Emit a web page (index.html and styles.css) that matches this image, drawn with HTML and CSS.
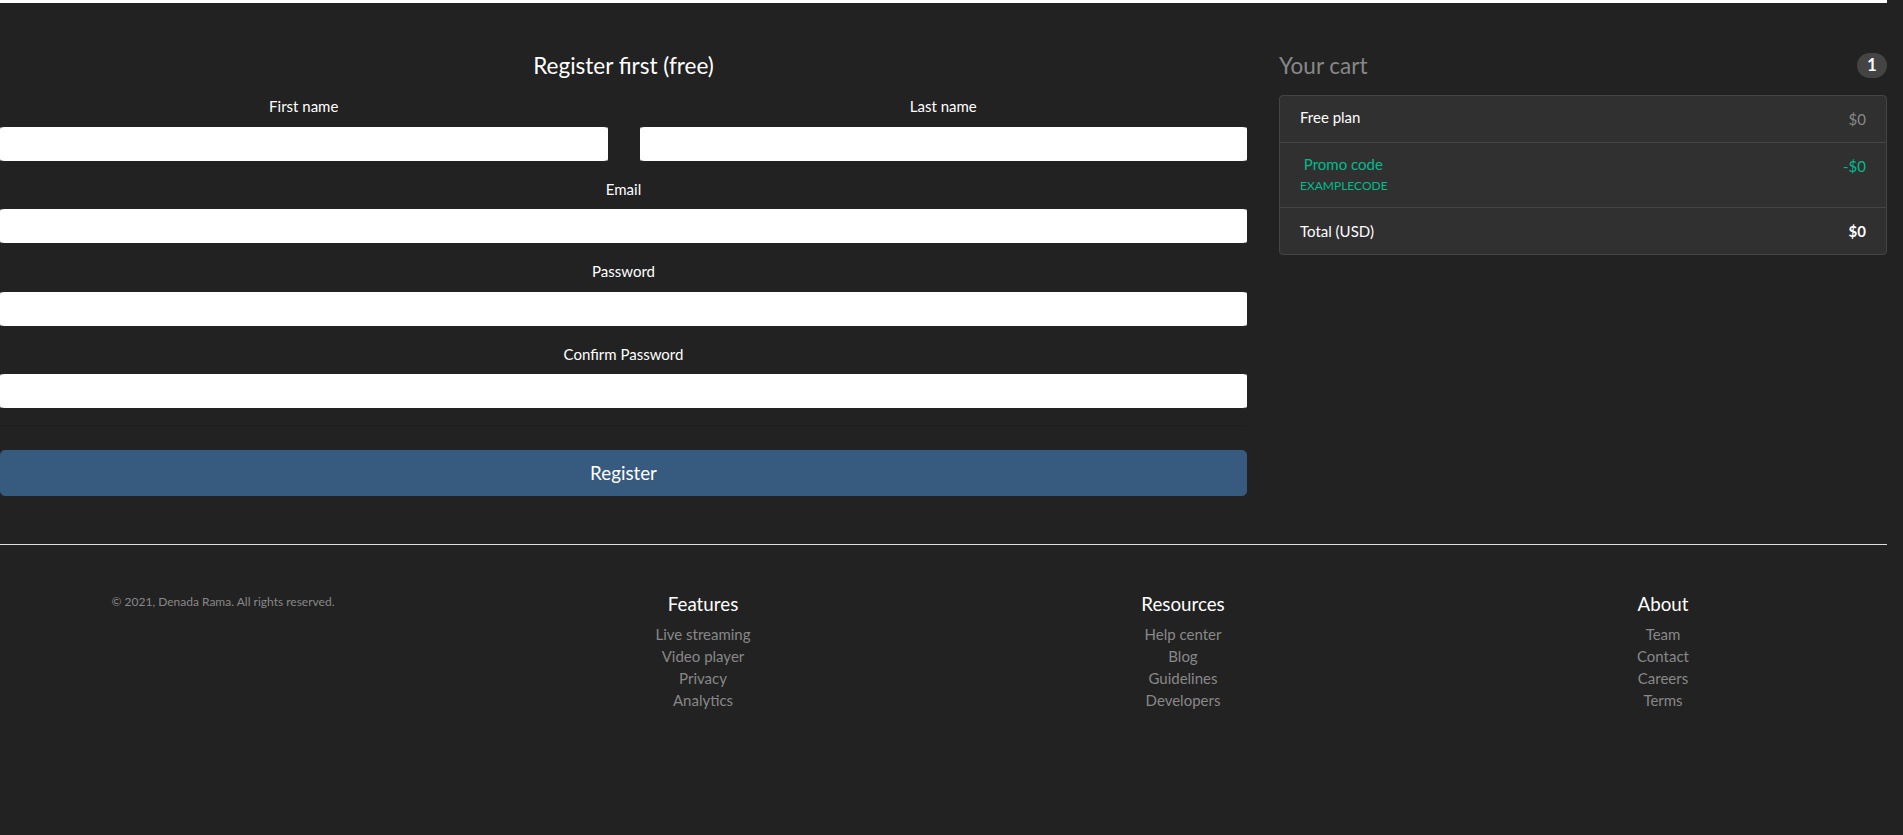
FILE: index.html
```html
<!DOCTYPE html>
<html lang="en">
<head>
<meta charset="utf-8">
<title>Register</title>
<link rel="stylesheet" href="styles.css">
</head>
<body>
<div class="topbar"></div>
<main class="page">
  <section class="form-col">
    <h4 class="title">Register first (free)</h4>
    <form class="form">
      <div class="two">
        <div class="group">
          <label class="label">First name</label>
          <input class="input" type="text">
        </div>
        <div class="group">
          <label class="label">Last name</label>
          <input class="input" type="text">
        </div>
      </div>
      <div class="group">
        <label class="label">Email</label>
        <input class="input" type="email">
      </div>
      <div class="group">
        <label class="label">Password</label>
        <input class="input" type="password">
      </div>
      <div class="group">
        <label class="label">Confirm Password</label>
        <input class="input" type="password">
      </div>
      <hr class="sep">
      <button class="btn" type="button">Register</button>
    </form>
  </section>
  <aside class="cart-col">
    <h4 class="cart-head"><span class="muted">Your cart</span><span class="badge">1</span></h4>
    <ul class="list">
      <li class="item">
        <div><h6 class="item-title">Free plan</h6></div>
        <span class="muted">$0</span>
      </li>
      <li class="item">
        <div class="success">
          <h6 class="item-title">&nbsp;Promo code</h6>
          <small class="small">EXAMPLECODE</small>
        </div>
        <span class="success">-$0</span>
      </li>
      <li class="item">
        <span>Total (USD)</span>
        <strong>$0</strong>
      </li>
    </ul>
  </aside>
</main>
<hr class="footer-line">
<footer class="footer">
  <div class="fcol">
    <small class="copy">© 2021, Denada Rama. All rights reserved.</small>
  </div>
  <div class="fcol">
    <h5 class="fhead">Features</h5>
    <ul class="links">
      <li><a href="#">Live streaming</a></li>
      <li><a href="#">Video player</a></li>
      <li><a href="#">Privacy</a></li>
      <li><a href="#">Analytics</a></li>
    </ul>
  </div>
  <div class="fcol">
    <h5 class="fhead">Resources</h5>
    <ul class="links">
      <li><a href="#">Help center</a></li>
      <li><a href="#">Blog</a></li>
      <li><a href="#">Guidelines</a></li>
      <li><a href="#">Developers</a></li>
    </ul>
  </div>
  <div class="fcol">
    <h5 class="fhead">About</h5>
    <ul class="links">
      <li><a href="#">Team</a></li>
      <li><a href="#">Contact</a></li>
      <li><a href="#">Careers</a></li>
      <li><a href="#">Terms</a></li>
    </ul>
  </div>
</footer>
</body>
</html>
```

FILE: styles.css
```css
* { box-sizing: border-box; }
html, body { margin: 0; padding: 0; }
body {
  background: #222222;
  color: #ffffff;
  font-family: Lato, "Open Sans", "Liberation Sans", sans-serif;
  font-size: 15px;
  line-height: 1.5;
  overflow-x: hidden;
  min-height: 835px;
}
.topbar {
  height: 3px;
  width: 1887px;
  background: #ffffff;
}
.page {
  display: grid;
  grid-template-columns: 1247px 1fr;
  column-gap: 32px;
  width: 1887px;
  padding-top: 49px;
}
.title {
  margin: 0 0 16px;
  font-size: 22.5px;
  font-weight: 400;
  line-height: 1.2;
  text-align: center;
}
.form { display: block; }
.two {
  display: grid;
  grid-template-columns: 1fr 1fr;
  column-gap: 32px;
}
.group { margin-bottom: 16px; }
.label {
  display: block;
  text-align: center;
  margin-bottom: 8px;
  color: #ffffff;
}
.input {
  display: block;
  width: 100%;
  height: 36px;
  padding: 6px 12px;
  font: inherit;
  background: #ffffff;
  border: 1px solid #222222;
  border-left-color: #ffffff;
  border-right-color: #ffffff;
  border-radius: 4px;
  outline: none;
}
.sep {
  margin: 16px 0 24px;
  border: 0;
  border-top: 1px solid rgba(0, 0, 0, 0.1);
}
.btn {
  display: block;
  width: 100%;
  height: 46px;
  padding: 8px 16px;
  background: #375a7f;
  color: #ffffff;
  border: 1px solid #375a7f;
  border-radius: 4.8px;
  font-family: inherit;
  font-size: 18.75px;
  line-height: 1.5;
}
.cart-head {
  display: flex;
  justify-content: space-between;
  align-items: center;
  margin: 0 0 16px;
  font-size: 22.5px;
  font-weight: 400;
  line-height: 1.2;
}
.muted { color: #888888; }
.badge {
  display: inline-block;
  background: #444444;
  color: #ffffff;
  font-size: 75%;
  font-weight: 700;
  line-height: 1;
  padding: 0.25em 0.6em;
  border-radius: 10rem;
}
.list {
  list-style: none;
  margin: 0;
  padding: 0;
  border: 1px solid #444444;
  border-radius: 4px;
  background: #303030;
}
.item {
  display: flex;
  justify-content: space-between;
  padding: 12px 20px 11.5px;
  border-top: 1px solid #444444;
}
.item:first-child { border-top: 0; }
.item-title {
  margin: 0;
  font-size: 15px;
  font-weight: 400;
  line-height: 1.2;
}
.success { color: #00bc8c; }
.small { font-size: 12px; }
strong { font-weight: 700; }
.footer-line {
  width: 1887px;
  margin: 48px 0 0;
  border: 0;
  border-top: 1px solid #dddddd;
}
.footer {
  display: grid;
  grid-template-columns: repeat(4, 480px);
  margin-left: -17px;
  padding: 48px 0 48px;
  text-align: center;
}
.copy {
  display: block;
  font-size: 12px;
  color: #888888;
}
.fhead {
  margin: 0 0 7px;
  font-size: 18.75px;
  font-weight: 400;
  line-height: 1.2;
}
.links {
  list-style: none;
  margin: 0;
  padding: 0;
  line-height: 22px;
}
.links a {
  color: #888888;
  text-decoration: none;
}
```
